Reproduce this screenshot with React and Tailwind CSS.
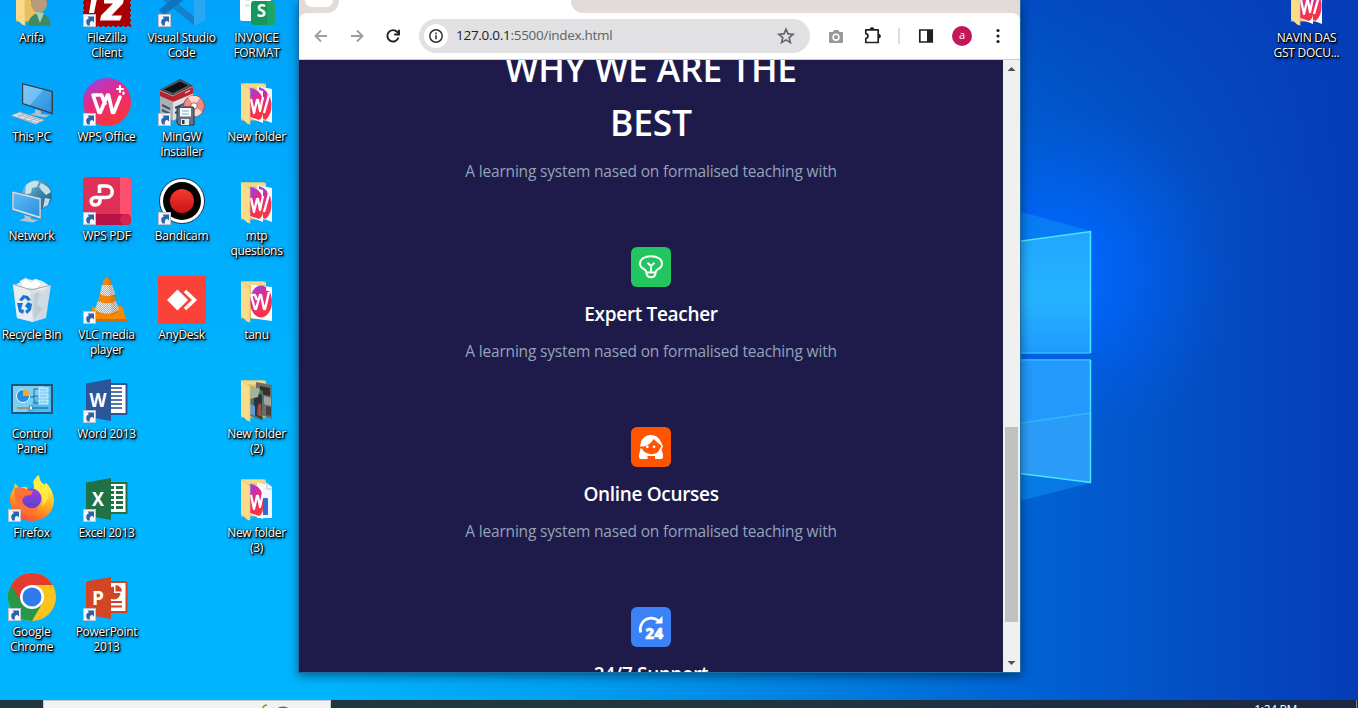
import React from "react";

const Svg = ({ children }) => (
  <svg viewBox="0 0 48 48" className="block h-12 w-12 shrink-0">{children}</svg>
);

const Shortcut = () => (
  <g>
    <rect x="0.5" y="35.5" width="12" height="12" fill="#f4f6f8" stroke="#b9c3cc" />
    <path d="M4.600 46.500c-2.400-3.500-1.400-6.300 1.400-7.200l-1.500-1.800h6.500v6l-1.900-1.800c-2.200.6-2.800 2.200-2.100 4.800z" fill="#2c62a8" />
  </g>
);

const WpsMark = ({ transform, width = 3.6 }) => (
  <g transform={transform} fill="none" stroke="#fff" strokeWidth={width} strokeLinejoin="round" strokeLinecap="round">
    <path d="M22 25.500L18.500 17H10l6 17.500h1.300L24.500 17h1l4 17.500h1.300L37 19" />
    <path d="M37 8v6M34 11h6" strokeWidth={width * 0.6} />
    <path d="M40.500 14.500v1.500" strokeWidth={width * 0.6} />
  </g>
);

const Grad = ({ id, stops, x2 = 0, y2 = 1 }) => (
  <linearGradient id={id} x1="0" y1="0" x2={x2} y2={y2}>
    {stops.map((c, i) => <stop key={i} offset={i / (stops.length - 1)} stopColor={c} />)}
  </linearGradient>
);

const Folder = ({ variant = "double" }) => (
  <Svg>
    <path d="M8 5.500h25v37H8z" fill="#e8c05e" />
    <path d="M8 5.500h22l3 2v2H12z" fill="#f6d987" />
    {variant === "user" ? (
      <g>
        <path d="M20 47q0-11 11-13 11 1 12 13z" fill="#3d8a63" />
        <ellipse cx="31" cy="24" rx="8" ry="10" fill="#b99b7a" />
        <path d="M23 22q0-9 8-9 9 0 8 9l-3-4H27z" fill="#5b4a36" />
        <path d="M28 33l4 11 4-10z" fill="#a9cdb9" />
      </g>
    ) : variant === "photo" ? (
      <g>
        <path d="M23 7l16 3v34l-16-6z" fill="#6f6d66" />
        <path d="M27 11l10 2v8l-10-2z" fill="#322f2d" />
        <path d="M31 21l7 2v8l-7-2z" fill="#a3a39a" />
        <path d="M33 31l5 1v9l-5-1z" fill="#45413e" />
        <path d="M17 11l13 5v30l-13-5z" fill="#49746f" />
        <path d="M21 17l8 3v24l-8-4z" fill="#30333b" />
        <path d="M17 29l5 2v10l-5-2z" fill="#5f9bd0" />
        <path d="M25 30l3-2 1 14-5-2z" fill="#9d5240" />
        <path d="M17 11l10 3-2 8-8 2z" fill="#a2b39a" />
      </g>
    ) : variant === "single" ? (
      <g>
        <path d="M18 9l21 2v34l-21-3z" fill="#fff" />
        <ellipse cx="28" cy="25.500" rx="11" ry="16" fill="url(#wps)" />
        <path d="M24 24l-2-5h-4l4 14h1l4-14h1l3 14h1l4-17M35 11v4M33 13h4" fill="none" stroke="#fff" strokeWidth="2.400" strokeLinejoin="round" />
      </g>
    ) : (
      <g>
        {variant === "docs" ? (
          <g>
            <path d="M24 9h10l5 4v31H24z" fill="#f1f5fc" />
            <path d="M29 9h5v6h5" fill="none" stroke="#b2bfd0" />
            <rect x="29" y="24" width="6" height="17" rx="1" fill="#2c6be0" />
          </g>
        ) : (
          <g>
            <path d="M24 8l15 3v34l-15-6z" fill="#f7f8fb" />
            <path d="M26 9q11 3 12.500 16 .5 12-6 17l-6-3z" fill="url(#wps)" />
            <path d="M31 35l5-18M35.500 12.500v4" fill="none" stroke="#fff" strokeWidth="2.400" />
          </g>
        )}
        <path d="M17 10l13 3v32l-13-5z" fill="#fff" />
        <path d="M17 10q12 1 13 15v9q0 6-4 8l-9-3z" fill="url(#wps)" />
        <path d="M18 21l3 14 3-13h1l2 11 3-14" fill="none" stroke="#fff" strokeWidth="2.300" strokeLinejoin="round" />
      </g>
    )}
    <path d="M8 5.500l9 6v35l-3-1-6-6z" fill="#f8dc8b" />
    <path d="M8 5.500l9 6v35" fill="none" stroke="#e7c368" strokeWidth=".7" />
  </Svg>
);

const Office = ({ color, dark, letter, kind }) => (
  <Svg>
    <rect x="22" y="8" width="22.500" height="32" rx="1.500" fill={color} />
    <rect x="25" y="10" width="17.500" height="28" fill="#fff" />
    {kind === "word" && [13, 17, 21, 25, 29, 33].map((y) => <path key={y} d={`M27 ${y}h12`} stroke={color} strokeWidth="1.600" />)}
    {kind === "excel" && (
      <g fill={color}>
        {[12, 17, 22, 27, 32].map((y) => (
          <g key={y}><rect x="27" y={y} width="4" height="3" /><rect x="33" y={y} width="7" height="3" /></g>
        ))}
      </g>
    )}
    {kind === "ppt" && (
      <g fill={color}>
        <path d="M31 13.500a6.500 6.500 0 1 0 6.500 6.500H31z" />
        <path d="M32.500 12v6.500H39a6.500 6.500 0 0 0-6.500-6.500z" />
        <rect x="27" y="28" width="12" height="2" /><rect x="27" y="32.500" width="12" height="2" />
      </g>
    )}
    <path d="M3 8.500L28 4v42L3 41.500z" fill={dark} />
    <text x="15" y="32" textAnchor="middle" fontFamily="Open Sans, sans-serif" fontWeight="700" fontSize="20" fill="#fff" textLength={letter === "W" ? 17 : 12} lengthAdjust="spacingAndGlyphs">{letter}</text>
    <Shortcut />
  </Svg>
);

const icons = {
  user: <Folder variant="user" />,
  folder: <Folder />,
  single: <Folder variant="single" />,
  photo: <Folder variant="photo" />,
  docs: <Folder variant="docs" />,
  filezilla: (
    <Svg>
      <rect x="1" y="1" width="46" height="46" fill="#a80000" stroke="#a80000" strokeWidth="2" strokeDasharray="2.500 2.500" />
      <path d="M6 34l4-24h15l-1 5h-9l-4 19z" fill="#fff" />
      <path d="M21 19h20l-1 5.500L28.500 36.500H39l-2 5H17l1-5L30 24.500h-9z" fill="#fff" />
      <Shortcut />
    </Svg>
  ),
  vscode: (
    <Svg>
      <path d="M1 18l5-4 31 24v9z" fill="#1482cf" />
      <path d="M1 31l5 5L37 12V2z" fill="#0e74bd" />
      <path d="M36 1l11 5v35l-11 6z" fill="#2ba6f0" />
      <Shortcut />
    </Svg>
  ),
  invoice: (
    <Svg>
      <rect x="7" y="0" width="31" height="42" rx="2" fill="#fff" />
      <path d="M12 17h5v5h-5zM12 25h5v3h-5z" fill="#dbeee3" />
      <rect x="18" y="22" width="24" height="24" rx="3" fill="#12985c" />
      <path d="M34 22h5q3 0 3 3v18q0 3-3 3h-5z" fill="#28ac70" opacity=".6" />
      <text x="28.500" y="38" textAnchor="middle" fontFamily="Open Sans, sans-serif" fontWeight="700" fontSize="17" fill="#fff">S</text>
    </Svg>
  ),
  pc: (
    <Svg>
      <path d="M14 5l31 8v23.500L14 26z" fill="#35414b" />
      <path d="M15.300 6.800L43.500 14v20.500L15.300 25.100z" fill="url(#screen)" />
      <path d="M15.300 6.800L35 11.800 22 27.300l-6.700-2.200z" fill="#8dd0fa" opacity=".6" />
      <path d="M27 31l6 2v3l9 1-5 2.500-15-3 5-2z" fill="#b4bdc5" />
      <path d="M3 37.500l9-3.500 24.500 8-9 4.200z" fill="#e7ebee" stroke="#8b98a3" strokeWidth=".7" />
      <path d="M6 38.500l23 6.500M9 36.500l23 7M12 35.500l21 6.500M9 39.500l8-4M15 41.500l8-4M21 43.500l8-3.500" stroke="#9aa6b0" strokeWidth=".8" />
    </Svg>
  ),
  wps: (
    <Svg>
      <circle cx="24" cy="24" r="24" fill="url(#wps)" />
      <WpsMark />
      <Shortcut />
    </Svg>
  ),
  mingw: (
    <Svg>
      <path d="M2 12L22 1l13 7v24L15 43 2 37z" fill="#2b2b2d" />
      <path d="M3 11.500L22 1.500 34 8 15 17z" fill="#54565b" />
      <path d="M6 11.500l16-8 8 4-15 7.500z" fill="#101011" />
      <path d="M2 12l13 5.500V43L2 37z" fill="#aab0b6" />
      <path d="M2 13l13 5.500v5L2 18z" fill="#b8202c" />
      <path d="M15 17.500L35 8v24L15 43z" fill="#dde1e5" />
      <path d="M15 18L35 8.500v7L15 24z" fill="#b92631" />
      <path d="M27 15l5-2.500" stroke="#fff" strokeWidth="1" />
      <path d="M4 27l8 4M4 32l8 4M17 30l11-5M17 35l9-4" stroke="#42516b" strokeWidth="2" />
      <circle cx="36" cy="28" r="10.500" fill="#e58e8c" stroke="#a84a49" />
      <path d="M36 28L30 19q7-3 12 1zM36 28l8 6q-3 5-8 4z" fill="#ffd9cf" />
      <circle cx="36" cy="28" r="3.300" fill="#fff" stroke="#b55" />
      <path d="M19 29h16l1 1v17H21l-2-2z" fill="#65717f" stroke="#28303a" />
      <rect x="22" y="30" width="11" height="8.500" fill="#f5fbff" />
      <path d="M24 33h7M24 36h7" stroke="#7fa5c8" />
      <rect x="23" y="41" width="8" height="6" fill="#e8ecef" /><rect x="24" y="42" width="2.500" height="4" fill="#303740" />
      <Shortcut />
    </Svg>
  ),
  network: (
    <Svg>
      <circle cx="29" cy="18" r="15" fill="url(#globe)" />
      <path d="M18 8q8-6 13-3l-2 5-5 1-1 5-6 2zM33 6q8 3 10 9l-5 3-4-4-3-4zM37 21l5 1-2 6-5 3z" fill="#d9eef1" opacity=".85" />
      <path d="M4 14l29 7v21L4 33z" fill="#dfe5e9" stroke="#66737d" strokeWidth=".6" />
      <path d="M5.500 16L31.500 22.500v17L5.500 31.500z" fill="url(#screen)" />
      <path d="M16 38l7 2v2l7 1-5 2.500-14-2 6-2.500z" fill="#b6c3cb" />
    </Svg>
  ),
  wpspdf: (
    <Svg>
      <rect width="48" height="48" rx="4" fill="#df3158" />
      <path d="M37 0h7q4 0 4 4v37H37z" fill="#ff4f6f" />
      <path d="M0 37h43q5 0 5 5.500T43 48H4q-4 0-4-4z" fill="#b71245" />
      <circle cx="42.500" cy="42.500" r="5.500" fill="#d2254f" />
      <path d="M16.500 16V9h7a5.500 5.500 0 0 1 0 11.500H12a3.700 3.700 0 0 0 0 7.500q5 0 5-5v-2" fill="none" stroke="#fff" strokeWidth="3.600" strokeLinejoin="round" />
      <Shortcut />
    </Svg>
  ),
  bandicam: (
    <Svg>
      <circle cx="24" cy="24" r="22.500" fill="#fff" stroke="#16384c" />
      <circle cx="24" cy="24" r="19" fill="#000" />
      <circle cx="24" cy="24" r="12" fill="url(#rec)" />
      <Shortcut />
    </Svg>
  ),
  bin: (
    <Svg>
      <path d="M6 10l8-5 5-2 5 1 4-1 6 2 8 5-5 8H10z" fill="#eef1f3" />
      <path d="M12 5l6-3 5 4 5-3 6 5-6 6-7-2-6 3z" fill="#fff" stroke="#c5ccd2" strokeWidth=".7" />
      <path d="M5 8l4 34 16 4 13-4 5-33-9 5-12 1z" fill="#d6dde2" opacity=".95" />
      <path d="M5 8l17 7 3 31-16-4z" fill="#e8edf0" />
      <path d="M26 18l6-2-3 12 6 5-9 10z" fill="#c2cbd2" />
      <path d="M5 8l18 6 20-5" fill="none" stroke="#98a5af" />
      <g fill="#1776d2"><path d="M11 24l4-5 5 1 3 4-3 1-3-3-3 3zM9 27h6l-2 6 3 1-1 4-4-2zM20 26l4 2-1 6-4 4-2-3 3-2-3-3z" /></g>
    </Svg>
  ),
  vlc: (
    <Svg>
      <path d="M9 31l30-1 5 16H8z" fill="#f58a09" />
      <path d="M8 43h36v3H8z" fill="#d66b00" />
      <path d="M21 3q3-3 6 0l9 33q-12 8-24 0z" fill="#f28407" />
      <path d="M19 9h10l3 9q-8 4-15 0zM15 25q9 5 18 0l3 9q-12 7-24 0z" fill="#eceded" />
      <path d="M19 9h10l3 9q-8 4-15 0zM15 25q9 5 18 0l3 9q-12 7-24 0z" fill="url(#check)" />
      <path d="M25 2h2l9 34-7 3z" fill="#7a3300" opacity=".15" />
      <Shortcut />
    </Svg>
  ),
  anydesk: (
    <Svg>
      <path d="M0 0h48v48H0z" fill="#fb4238" />
      <path d="M9 24l10.500-10.500L30 24 19.500 34.500z" fill="#fff" />
      <path d="M26 15l9.500 9-9.500 9" fill="none" stroke="#fff" strokeWidth="3.600" transform="translate(1)" />
    </Svg>
  ),
  control: (
    <Svg>
      <g transform="translate(0 3)">
        <rect x="4" y="7" width="40" height="28" fill="#4cbcf2" stroke="#205779" strokeWidth="2" />
        <path d="M5 8h32L18 34H5z" fill="#a2defa" opacity=".55" />
        <circle cx="15" cy="18" r="6.500" fill="#238fdc" stroke="#eaf8ff" strokeWidth="1" />
        <path d="M15 11v7h7a7 7 0 0 0-7-7z" fill="#f8a623" />
        <path d="M22 19h4v-8h5M26 18h5M26 18v7h5" fill="none" stroke="#1c6490" />
        {[10, 16, 22].map((y) => <rect key={y} x="31" y={y} width="9" height="4" fill="#8ed2f4" stroke="#d9f3ff" />)}
        <path d="M9 30h31" stroke="#155f8b" /><path d="M9 30h13" stroke="#f4912d" />
        <rect x="21.500" y="28" width="3" height="4" fill="#dff5ff" stroke="#1b6c9c" strokeWidth=".6" />
      </g>
    </Svg>
  ),
  firefox: (
    <Svg>
      <path d="M24 47C11 47 2 38 2 25q0-6 4-11l1-5 4 5q5-2 8-1l1 5 5 1q2-6 0-11 3-6 6-7 0 6 5 10l2-2q7 6 8 17C46 39 36 47 24 47z" fill="url(#fox)" />
      <path d="M31 1q-6 5-5 13l6 6q4 5 2 12 8-6 6-16 3 3 4 8 0-6-3-11-2-4-3-4l-1 2Q31 8 31 1z" fill="#fff044" opacity=".75" />
      <circle cx="23.500" cy="24.500" r="10" fill="url(#plum)" />
      <path d="M7 14q8-2 12 2l6 1-2 4q-6 0-8 3-2 5 3 8 5 4 11 1 2 4-5 5-10 1-15-7-4-9-2-17z" fill="#ff7139" />
      <Shortcut />
    </Svg>
  ),
  chrome: (
    <Svg>
      <circle cx="24" cy="24" r="24" fill="#fcc31d" />
      <path d="M24 24L3.200 12a24 24 0 0 0 20.800 36l10.400-18z" fill="#25984a" />
      <path d="M3.200 12a24 24 0 0 1 41.600 0H24l-10.400 18z" fill="#e33b2f" />
      <circle cx="24" cy="24" r="12" fill="#fff" />
      <circle cx="24" cy="24" r="9.500" fill="#2f7bee" />
      <Shortcut />
    </Svg>
  ),
  word: <Office color="#2a5699" dark="#2a5699" letter="W" kind="word" />,
  excel: <Office color="#207245" dark="#207245" letter="X" kind="excel" />,
  ppt: <Office color="#d04423" dark="#d24625" letter="P" kind="ppt" />,
};

const desktop = [
  ["user", "Arifa"], ["filezilla", "FileZilla", "Client"], ["vscode", "Visual Studio", "Code"], ["invoice", "INVOICE", "FORMAT"],
  ["pc", "This PC"], ["wps", "WPS Office"], ["mingw", "MinGW", "Installer"], ["folder", "New folder"],
  ["network", "Network"], ["wpspdf", "WPS PDF"], ["bandicam", "Bandicam"], ["folder", "mtp", "questions"],
  ["bin", "Recycle Bin"], ["vlc", "VLC media", "player"], ["anydesk", "AnyDesk"], ["single", "tanu"],
  ["control", "Control", "Panel"], ["word", "Word 2013"], null, ["photo", "New folder", "(2)"],
  ["firefox", "Firefox"], ["excel", "Excel 2013"], null, ["docs", "New folder", "(3)"],
  ["chrome", "Google", "Chrome"], ["ppt", "PowerPoint", "2013"],
];

const DesktopIcon = ({ icon, lines }) => (
  <div className="flex h-[99px] w-[75px] flex-col items-center pr-px">
    {icons[icon]}
    <div className="mt-[3px] pr-px text-center text-[12px] leading-[15px] tracking-[-0.28px] text-white [text-shadow:0_0_2px_#000,1px_1px_2px_#000,1px_1px_1px_#000,1px_2px_3px_rgba(0,0,0,0.6)]">
      {lines.map((l) => <div key={l} className="whitespace-nowrap">{l}</div>)}
    </div>
  </div>
);

const Defs = () => (
  <svg className="absolute h-0 w-0">
    <defs>
      <Grad id="wps" stops={["#8b46f5", "#e62a83", "#f9353d"]} x2={0.5} />
      <Grad id="screen" stops={["#5ebcf7", "#2c8fe0"]} x2={1} />
      <Grad id="globe" stops={["#8fd0e6", "#3e88ae", "#1d5a80"]} x2={1} />
      <Grad id="rec" stops={["#f5392c", "#c91418"]} />
      <Grad id="fox" stops={["#ffe53b", "#ffa51f", "#ff5a2f", "#f21d67"]} x2={-0.4} />
      <Grad id="plum" stops={["#a03be8", "#5b44c8"]} />
      <pattern id="check" width="2" height="2" patternUnits="userSpaceOnUse">
        <path d="M0 0h1v1H0zM1 1h1v1H1z" fill="#aab0b3" />
      </pattern>
    </defs>
  </svg>
);

const Wallpaper = () => (
  <svg viewBox="0 0 1358 708" className="absolute inset-0 h-[708px] w-[1358px]">
    <defs>
      <linearGradient id="sky" x1="0" x2="1">
        <stop offset="0" stopColor="#00b4ff" />
        <stop offset=".24" stopColor="#00b4ff" />
        <stop offset=".42" stopColor="#009ff2" />
        <stop offset=".55" stopColor="#0088e4" />
        <stop offset=".76" stopColor="#0062d3" />
        <stop offset=".87" stopColor="#0450c6" />
        <stop offset="1" stopColor="#043cb6" />
      </linearGradient>
      <linearGradient id="topShade" x1="0" x2="0" y1="0" y2="1">
        <stop offset="0" stopColor="#0090f8" stopOpacity=".45" />
        <stop offset=".6" stopColor="#0090f8" stopOpacity="0" />
      </linearGradient>
      <linearGradient id="topDark" x1="0" x2="0" y1="0" y2="1">
        <stop offset="0" stopColor="#043cb8" stopOpacity=".6" />
        <stop offset="1" stopColor="#043cb8" stopOpacity="0" />
      </linearGradient>
      <radialGradient id="glow" gradientUnits="userSpaceOnUse" cx="1060" cy="275" r="175">
        <stop offset="0" stopColor="#006aff" />
        <stop offset=".35" stopColor="#0064fa" stopOpacity=".8" />
        <stop offset="1" stopColor="#0058e0" stopOpacity="0" />
      </radialGradient>
      <linearGradient id="paneTop" x1="0" x2="0" y1="0" y2="1">
        <stop offset="0" stopColor="#22a5ff" /><stop offset=".55" stopColor="#24b4ff" /><stop offset="1" stopColor="#2099ff" />
      </linearGradient>
    </defs>
    <path d="M0 0h1358v708H0z" fill="url(#sky)" />
    <path d="M0 0h700v708H0z" fill="url(#topShade)" />
    <path d="M1000 0h358v200h-358z" fill="url(#topDark)" />
    <path d="M870 90h400v400H870z" fill="url(#glow)" />
    <path d="M1000 206l91 25-91 13zM1000 506l91-23-91-13z" fill="#0b8cf2" opacity=".6" />
    <path d="M1000 244l91-13v122h-91z" fill="url(#paneTop)" />
    <path d="M1000 359h91v124l-91-13z" fill="#2299fc" />
    <path d="M1000 426l91-13v70l-91-13z" fill="#2d9cf6" opacity=".7" />
    <path d="M1000 426l91-13" stroke="#32b5fb" strokeWidth="1.500" />
    <path d="M1000 353h90M1000 360h90" stroke="#38b5fb" strokeWidth="1.300" />
    <path d="M1000 244l90.500-12.500V353M1090.500 360v122.500L1000 471" fill="none" stroke="#4be6ff" strokeWidth="1.500" />
  </svg>
);

const GLYPH = "h-5 w-5 shrink-0";

const Toolbar = () => (
  <div className="flex h-[47px] shrink-0 items-center rounded-t-lg border-b border-[#c9c9c9] bg-white pl-3">
    <svg viewBox="0 0 20 20" className={GLYPH} fill="none" stroke="#9b9ea1" strokeWidth="1.800"><path d="M16 10H4.500M10 4.500L4.500 10l5.500 5.500" /></svg>
    <svg viewBox="0 0 20 20" className="ml-4 h-5 w-5 shrink-0" fill="none" stroke="#9b9ea1" strokeWidth="1.800"><path d="M4 10h11.500M10 4.500l5.500 5.500-5.500 5.500" /></svg>
    <svg viewBox="0 0 20 20" className="ml-4 h-5 w-5 shrink-0" fill="none" stroke="#1f2023" strokeWidth="1.900"><path d="M15.500 11.500A5.700 5.700 0 1 1 14.300 6L16 8" /><path d="M16 3.700v4.800h-4.800" /></svg>
    <div className="ml-4 flex h-[34px] w-[391px] shrink-0 items-center rounded-full bg-[#e1e1e3] pl-[5px] pr-3.5">
      <div className="flex h-6 w-6 items-center justify-center rounded-full bg-white">
        <svg viewBox="0 0 16 16" className="h-4 w-4" fill="none" stroke="#303134"><circle cx="8" cy="8" r="6.200" strokeWidth="1.500" /><path d="M8 7.200v4M8 4.600v1.600" strokeWidth="1.600" /></svg>
      </div>
      <div className="ml-2 flex-1 whitespace-nowrap pb-0.5 text-[13.5px] tracking-[-0.28px] text-[#5f6368]"><span className="text-[#202124]">127.0.0.1</span>:5500/index.html</div>
      <svg viewBox="0 0 20 20" className={GLYPH} fill="none" stroke="#5f6368" strokeWidth="1.600"><path d="M10 3.200l2 4.700 5.100.4-3.900 3.300 1.200 5L10 13.900l-4.400 2.700 1.200-5-3.900-3.300 5.100-.4z" /></svg>
    </div>
    <svg viewBox="0 0 20 20" className="ml-4 h-5 w-5 shrink-0" fill="#96999c"><path fillRule="evenodd" d="M4 6h3L8.200 4h4L13.500 6H16q1 0 1 1v9q0 1-1 1H4q-1 0-1-1V7q0-1 1-1zM10 7.500a3.700 3.700 0 1 0 0 7.400 3.700 3.700 0 0 0 0-7.400z" /><circle cx="10" cy="11.200" r="2.100" /></svg>
    <svg viewBox="0 0 20 20" className="ml-[17px] h-5 w-5 shrink-0" fill="none" stroke="#1f2023" strokeWidth="1.700" strokeLinejoin="round"><path d="M2.800 3.800h12.400v12.700H2.800v-4q2.200-.4 2.200-2.400T2.800 7.700z" /><path d="M7 3.500a2 2 0 0 1 4 0zM15.500 8.200a2 2 0 0 1 0 4z" fill="#1f2023" strokeWidth=".8" /></svg>
    <div className="ml-[15px] h-4 w-0.5 bg-[#e3dbd8]" />
    <svg viewBox="0 0 20 20" className="ml-4 h-5 w-5 shrink-0"><path d="M3.800 4h12.400v12H3.800z" fill="none" stroke="#1f2023" strokeWidth="1.700" /><path d="M11 4h5v12h-5z" fill="#1f2023" /></svg>
    <div className="ml-4 flex h-5 w-5 items-center justify-center rounded-full bg-[#c2185b] pb-px text-[11px] text-white">a</div>
    <svg viewBox="0 0 20 20" className="ml-4 h-5 w-5 shrink-0" fill="#1f2023"><circle cx="10" cy="4.500" r="1.600" /><circle cx="10" cy="10" r="1.600" /><circle cx="10" cy="15.500" r="1.600" /></svg>
  </div>
);

const BulbIcon = () => (
  <svg viewBox="0 0 24 24" className="h-6 w-6" fill="none" stroke="#fff" strokeWidth="2" strokeLinecap="round" strokeLinejoin="round">
    <path d="M7.500 17.500q-.2-2-2.500-3.300-4-2.200-4-5.700C1 4.200 5.500 1.200 12 1.200S23 4.200 23 8.500q0 3.500-4 5.700-2.300 1.300-2.500 3.300z" />
    <path d="M7.500 17.500q0 4.800 4.500 4.800t4.500-4.800M12 17v-6M9 8.300l3 2.700 3-2.700" />
  </svg>
);

const WomanIcon = () => (
  <svg viewBox="0 0 24 24" className="h-6 w-6">
    <path fill="#fff" d="M12 0C5.500 0 1.500 4.500 1.200 11.500V15L0 20q-.5 4 2 4h20q2.500 0 2-4l-1.500-6 1.500-2.500Q23 9 21.500 6 18.500 0 12 0z" />
    <path fill="#ff5400" d="M0 11.500h4.500Q11.500 10 14.500 4l8 7-1.500 2.500q-1 3-3 4.300-5.500 3-11.500-.3-3-2-3.500-4H0zM8.500 21H16v3H8.500z" />
    <circle cx="8.300" cy="11.800" r="1.400" fill="#fff" /><circle cx="15" cy="11.800" r="1.400" fill="#fff" />
  </svg>
);

const RoundClockIcon = () => (
  <svg viewBox="0 0 40 40" className="h-10 w-10">
    <path d="M9.800 25.500A11 11 0 0 1 27.500 13.800" fill="none" stroke="#fff" strokeWidth="2.800" />
    <path d="M31.500 9v7.500H24z" fill="#fff" />
    <text x="14.200" y="32" fontFamily="Open Sans, sans-serif" fontWeight="800" fontSize="16" fill="#fff" stroke="#fff" strokeWidth=".4" textLength="18" lengthAdjust="spacingAndGlyphs">24</text>
  </svg>
);

const Feature = ({ tone, title, children, text }) => (
  <div className="flex h-[180px] shrink-0 flex-col items-center">
    <div className={`flex h-10 w-10 shrink-0 items-center justify-center rounded-md text-white ${tone}`}>{children}</div>
    <h2 className="mt-3 whitespace-nowrap text-[19px] font-[650] leading-[30px] tracking-[-0.32px] text-white">{title}</h2>
    {text && <p className="mt-[10px] whitespace-nowrap text-[15.5px] leading-6 tracking-[-0.17px] text-[#94a3b8]">{text}</p>}
  </div>
);

const LEAD = "A learning system nased on formalised teaching with";

const Page = () => (
  <main className="flex min-w-0 flex-1 flex-col items-center overflow-hidden bg-[#1e1b4b]">
    <h1 className="-mt-[19px] whitespace-nowrap text-center text-[35.5px] font-[650] leading-[54px] tracking-[-0.2px] text-white">
      WHY WE ARE THE<br />BEST
    </h1>
    <p className="mt-[10px] whitespace-nowrap text-[15.5px] leading-6 tracking-[-0.17px] text-[#94a3b8]">{LEAD}</p>
    <div className="mt-16 flex flex-col">
      <Feature tone="bg-[#22c55e]" title="Expert Teacher" text={LEAD}><BulbIcon /></Feature>
      <Feature tone="bg-[#ff5400]" title="Online Ocurses" text={LEAD}><WomanIcon /></Feature>
      <Feature tone="bg-[#3b82f6]" title="24/7 Support"><RoundClockIcon /></Feature>
    </div>
  </main>
);

const Scrollbar = () => (
  <div className="flex w-[17px] shrink-0 flex-col items-center bg-[#f0f0f0]">
    <svg viewBox="0 0 17 17" className="h-[17px] w-[17px]"><path d="M4.500 11h8l-4-4z" fill="#505050" /></svg>
    <div className="mt-[350px] h-[195px] w-[13px] bg-[#c1c1c1]" />
    <svg viewBox="0 0 17 17" className="mt-auto h-[17px] w-[17px]"><path d="M4.500 6h8l-4 4z" fill="#505050" /></svg>
  </div>
);

const BrowserWindow = () => (
  <div className="absolute left-[298px] top-0 flex h-[673px] w-[723px] flex-col border border-t-0 border-[#1c6ca5] bg-[#e3dbd8] shadow-[0_3px_10px_rgba(0,0,0,0.45)]">
    <div className="flex h-[13px] shrink-0">
      <div className="z-10 h-[13px] w-10 rounded-br-xl bg-[#e3dbd8] pl-1.5"><div className="h-[7px] w-7 rounded-b-lg bg-white" /></div>
      <div className="-mx-3 -mb-2 w-[256px] bg-white" />
      <div className="z-10 flex-1 rounded-bl-xl bg-[#e3dbd8]" />
    </div>
    <Toolbar />
    <div className="flex min-h-0 flex-1"><Page /><Scrollbar /></div>
  </div>
);

const Taskbar = () => (
  <div className="absolute bottom-0 left-0 flex h-2 w-full justify-between overflow-hidden bg-linear-to-r from-[#203741] via-[#21363f] to-[#1b2845]">
    <div className="ml-[43px] h-10 w-72 border border-[#c5cbcd] bg-[#f2f2f2]">
      <svg viewBox="0 0 288 8" className="h-2 w-72"><path d="M219 8q0-4 4-4" fill="none" stroke="#7a9a2c" strokeWidth="1.500" /><ellipse cx="239" cy="8" rx="5" ry="2.500" fill="#5f7a20" /></svg>
    </div>
    <div className="flex h-10">
      <div className="mr-[59px] mt-[2px] whitespace-nowrap text-[12px] leading-[16px] tracking-[-0.3px] text-white">1:24 PM</div>
      <div className="mr-px w-px bg-[#7d8798]" />
    </div>
  </div>
);

export default function App() {
  return (
    <div className="relative h-[708px] w-[1358px] overflow-hidden bg-[#00a8ff] font-['Open_Sans','Noto_Sans',sans-serif]">
      <Defs />
      <Wallpaper />
      <div className="absolute -left-[5px] -top-[21px] grid grid-cols-[repeat(4,75px)]">
        {desktop.map((d, i) => (d ? <DesktopIcon key={i} icon={d[0]} lines={d.slice(1)} /> : <div key={i} />))}
      </div>
      <div className="absolute -top-[21px] left-[1270px]"><DesktopIcon icon="folder" lines={["NAVIN DAS", "GST DOCU..."]} /></div>
      <BrowserWindow />
      <Taskbar />
    </div>
  );
}
